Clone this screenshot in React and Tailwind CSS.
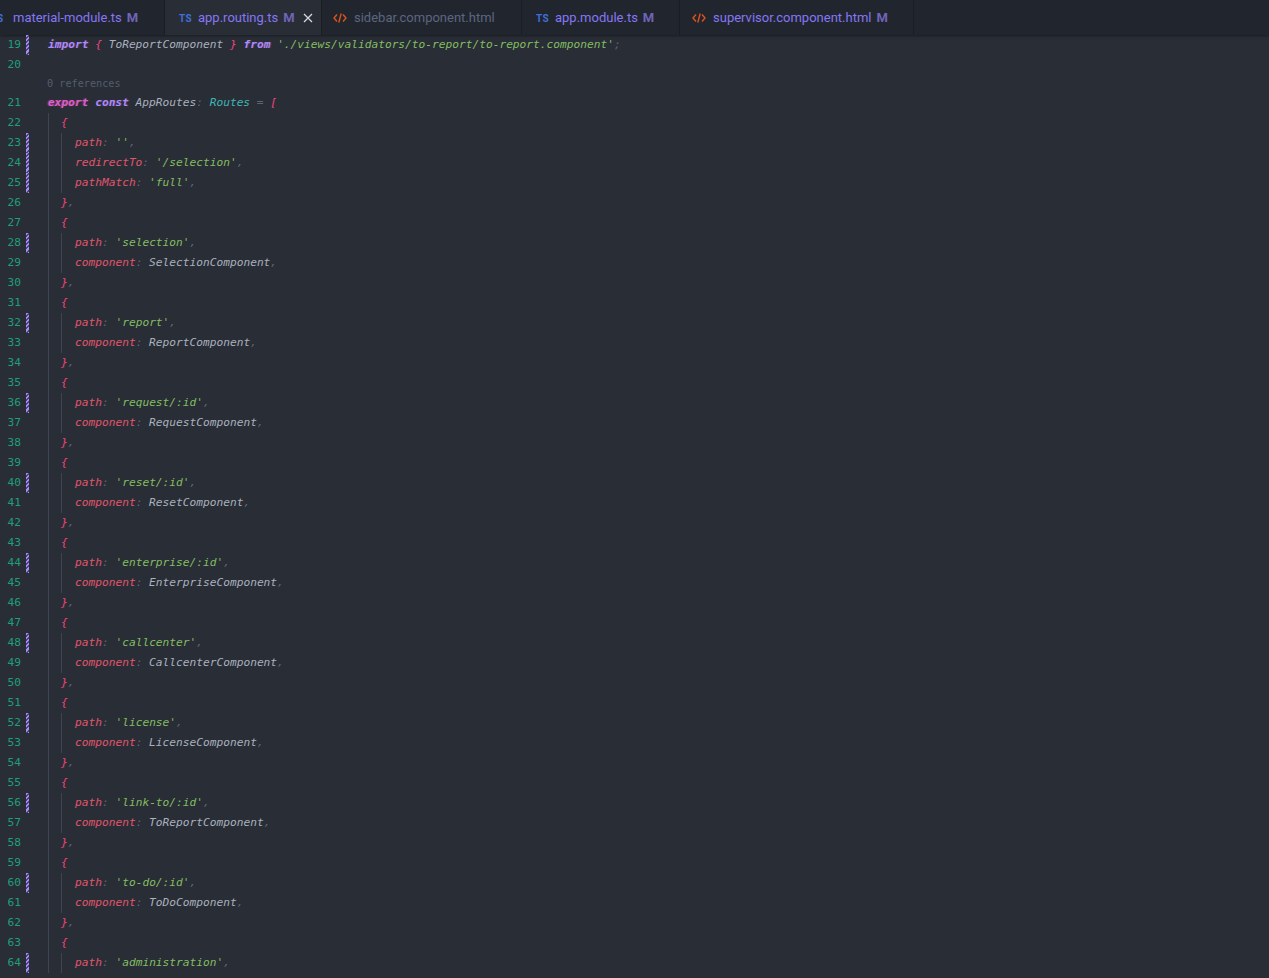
import React from 'react'

const KEY = 'text-[#e0566c]'
const STR = 'text-[#83bd62]'
const PUNCT = 'text-[#5c6675]'
const BRACE = 'text-[#f0457f]'
const NAME = 'text-[#a9b1be]'
const IMPORT = 'font-bold text-[#a78bfa] [text-shadow:1px_0_1px_rgba(236,72,153,0.35)]'

function Prop({ name, children }) {
  return (
    <>
      <span className={KEY}>{name}</span>
      <span className={PUNCT}>: </span>
      {children}
      <span className={PUNCT}>,</span>
    </>
  )
}

function Str({ value }) {
  return <span className={STR}>'{value}'</span>
}

function Comp({ name }) {
  return <span className={NAME}>{name}</span>
}

function Row({ n, changed, indent = 0, lens, children }) {
  return (
    <>
      {lens && (
        <div className="h-[18px] pl-[47px] text-[10.2px] leading-[17px] not-italic text-[#555d6e]">
          0 references
        </div>
      )}
      <div className="flex h-5 items-center leading-5">
        <div className="w-[21px] text-right not-italic text-[#1f9e7c]">{n}</div>
        <div className="ml-[5px] h-5 w-[3px]">
          {changed && (
            <div className="h-full w-full bg-[repeating-linear-gradient(135deg,#a78bfa,#a78bfa_1.5px,#4a4678_1.5px,#4a4678_3px)]" />
          )}
        </div>
        <div className="ml-[19px] flex h-5 items-center whitespace-pre">
          {indent > 0 && <div className="h-5 w-[13px] border-l border-[#3f4451]" />}
          {indent > 1 && <div className="h-5 w-[14px] border-l border-[#3f4451]" />}
          <div>{children}</div>
        </div>
      </div>
    </>
  )
}

function Block({ start, path, comp, last }) {
  return (
    <>
      <Row n={start} indent={1}>
        <span className={BRACE}>{'{'}</span>
      </Row>
      <Row n={start + 1} indent={2} changed>
        <Prop name="path"><Str value={path} /></Prop>
      </Row>
      {!last && (
        <>
          <Row n={start + 2} indent={2}>
            <Prop name="component"><Comp name={comp} /></Prop>
          </Row>
          <Row n={start + 3} indent={1}>
            <span className={BRACE}>{'}'}</span>
            <span className={PUNCT}>,</span>
          </Row>
        </>
      )}
    </>
  )
}

function FileIcon({ type }) {
  if (type === 'ts') {
    return <span className="w-[12px] text-[10px] font-bold tracking-[0.5px] text-[#3f6fd8]">TS</span>
  }
  return (
    <svg width="14" height="12" viewBox="0 0 14 12" fill="none" stroke="#d9541e" strokeWidth="1.4" className="shrink-0">
      <path d="M4 2.5 1 6l3 3.5M10 2.5 13 6l-3 3.5M8.2 1.5 5.8 10.5" />
    </svg>
  )
}

function Tab({ type, name, width, active, modified = true, dim, offset }) {
  return (
    <div
      className={
        'flex h-[35px] shrink-0 items-center gap-[7px] border-r border-[#1a1d24] pt-[1px] ' +
        width + ' ' + offset + ' ' +
        (active ? 'bg-[#292d36]' : 'bg-[#21252e]')
      }
    >
      <FileIcon type={type} />
      <span className={'text-[13px] ' + (dim ? 'text-[#5c6580]' : 'text-[#8577f5]')}>{name}</span>
      {modified && <span className="ml-[-2px] text-[13px] font-bold text-[#6f64b8]">M</span>}
      {active && (
        <svg width="10" height="10" viewBox="0 0 10 10" stroke="#d5d8de" strokeWidth="1.3" className="ml-[1px]">
          <path d="M1 1l8 8M9 1l-8 8" />
        </svg>
      )}
    </div>
  )
}

export default function App() {
  return (
    <div className="h-[978px] overflow-hidden bg-[#292d36] font-['Roboto',sans-serif]">
      {/* tab strip */}
      <div className="flex h-[35px] overflow-hidden bg-[#21252e] shadow-[0_1px_3px_rgba(0,0,0,0.4)]">
        <div className="flex h-[35px] w-[165px] shrink-0 items-center gap-[7px] border-r border-[#1a1d24] bg-[#21252e] pt-[1px]">
          <span className="ml-[-3px] w-[9px] text-[10px] font-bold text-[#3f6fd8]">S</span>
          <span className="text-[13px] text-[#8577f5]">material-module.ts</span>
          <span className="ml-[-2px] text-[13px] font-bold text-[#6f64b8]">M</span>
        </div>
        <Tab type="ts" name="app.routing.ts" width="w-[157px]" offset="pl-[14px]" active />
        <Tab type="html" name="sidebar.component.html" width="w-[200px]" offset="pl-[11px]" modified={false} dim />
        <Tab type="ts" name="app.module.ts" width="w-[158px]" offset="pl-[14px]" />
        <Tab type="html" name="supervisor.component.html" width="w-[234px]" offset="pl-[12px]" />
      </div>

      {/* editor */}
      <div className="font-['DejaVu_Sans_Mono',monospace] text-[11.2px] italic">
        <Row n={19} changed>
          <span className={IMPORT}>import</span>
          <span className={BRACE}> {'{'} </span>
          <Comp name="ToReportComponent" />
          <span className={BRACE}> {'}'} </span>
          <span className={IMPORT}>from</span>
          <span className={STR}> './views/validators/to-report/to-report.component'</span>
          <span className={PUNCT}>;</span>
        </Row>
        <Row n={20} />
        <Row n={21} lens>
          <span className="font-bold text-[#d65fd0] [text-shadow:-1px_0_1px_rgba(236,72,153,0.5)]">export</span>
          <span className={IMPORT}> const</span>
          <Comp name=" AppRoutes" />
          <span className={PUNCT}>: </span>
          <span className="text-[#3fb6b2]">Routes</span>
          <span className={PUNCT}> = </span>
          <span className={BRACE}>[</span>
        </Row>
        <Row n={22} indent={1}>
          <span className={BRACE}>{'{'}</span>
        </Row>
        <Row n={23} indent={2} changed>
          <Prop name="path"><Str value="" /></Prop>
        </Row>
        <Row n={24} indent={2} changed>
          <Prop name="redirectTo"><Str value="/selection" /></Prop>
        </Row>
        <Row n={25} indent={2} changed>
          <Prop name="pathMatch"><Str value="full" /></Prop>
        </Row>
        <Row n={26} indent={1}>
          <span className={BRACE}>{'}'}</span>
          <span className={PUNCT}>,</span>
        </Row>
        <Block start={27} path="selection" comp="SelectionComponent" />
        <Block start={31} path="report" comp="ReportComponent" />
        <Block start={35} path="request/:id" comp="RequestComponent" />
        <Block start={39} path="reset/:id" comp="ResetComponent" />
        <Block start={43} path="enterprise/:id" comp="EnterpriseComponent" />
        <Block start={47} path="callcenter" comp="CallcenterComponent" />
        <Block start={51} path="license" comp="LicenseComponent" />
        <Block start={55} path="link-to/:id" comp="ToReportComponent" />
        <Block start={59} path="to-do/:id" comp="ToDoComponent" />
        <Block start={63} path="administration" last />
      </div>
    </div>
  )
}
